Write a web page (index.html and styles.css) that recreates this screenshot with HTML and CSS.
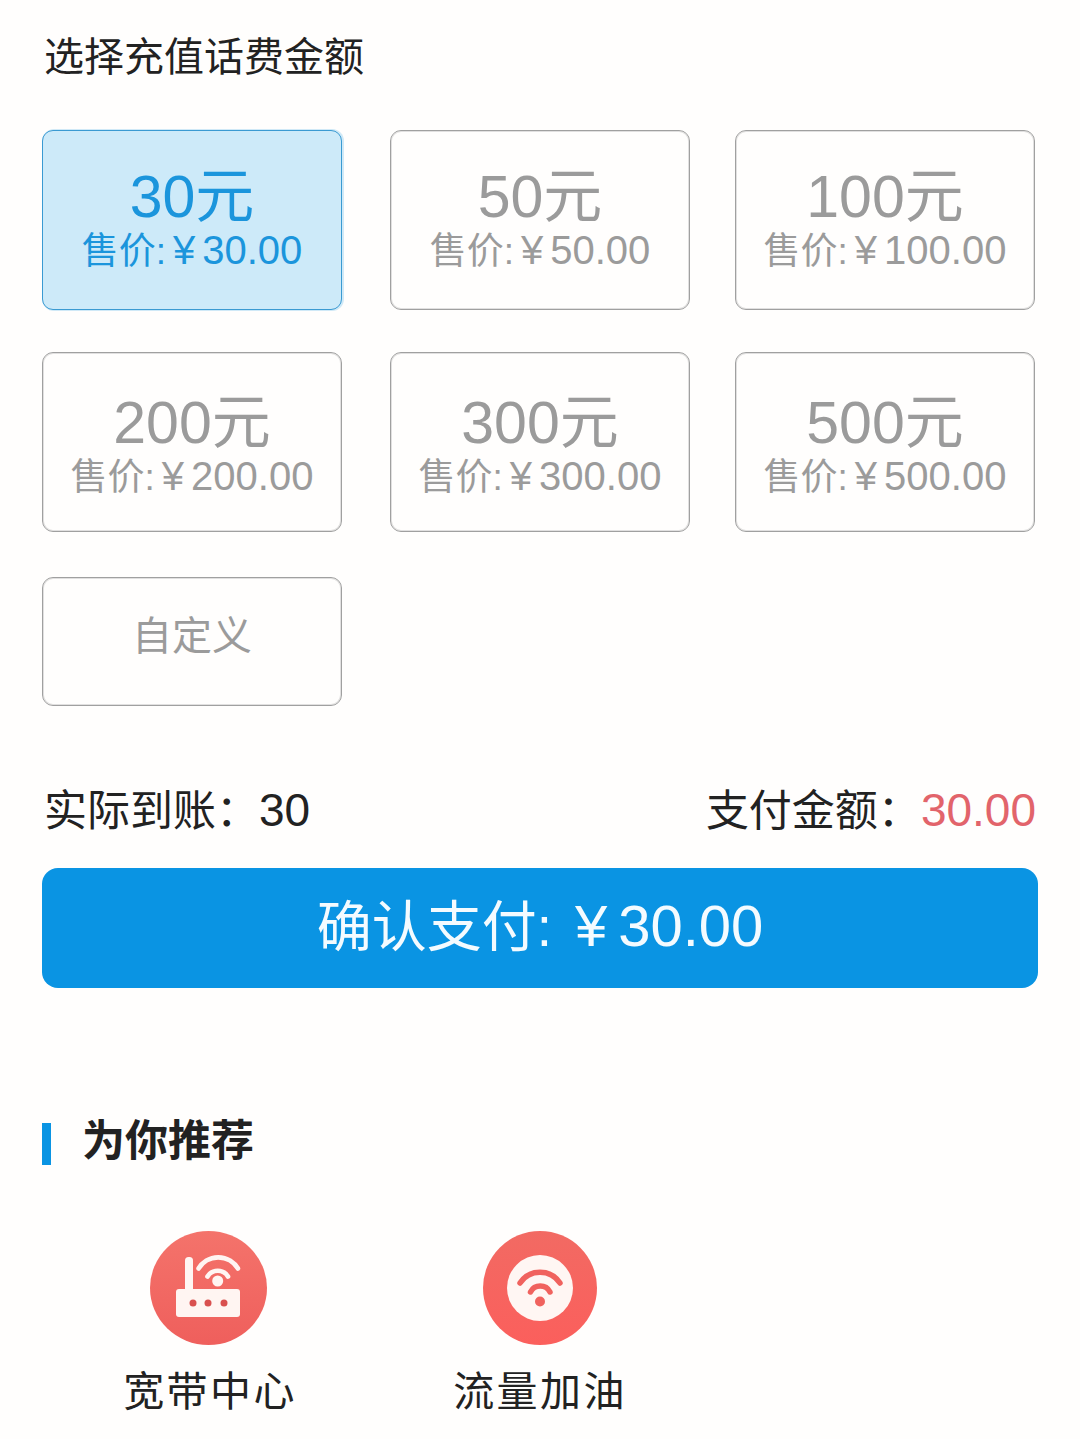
FILE: index.html
```html
<!DOCTYPE html>
<html lang="zh-CN">
<head>
<meta charset="utf-8">
<title>选择充值话费金额</title>
<link rel="stylesheet" href="styles.css">
</head>
<body>
<main class="page">
  <h1 class="title">选择充值话费金额</h1>
  <div class="grid">
    <div class="card active"><div class="amount">30元</div><div class="price">售价:<span class="yen">¥</span><span class="val">30.00</span></div></div>
    <div class="card"><div class="amount">50元</div><div class="price">售价:<span class="yen">¥</span><span class="val">50.00</span></div></div>
    <div class="card"><div class="amount">100元</div><div class="price">售价:<span class="yen">¥</span><span class="val">100.00</span></div></div>
    <div class="card low"><div class="amount">200元</div><div class="price">售价:<span class="yen">¥</span><span class="val">200.00</span></div></div>
    <div class="card low"><div class="amount">300元</div><div class="price">售价:<span class="yen">¥</span><span class="val">300.00</span></div></div>
    <div class="card low"><div class="amount">500元</div><div class="price">售价:<span class="yen">¥</span><span class="val">500.00</span></div></div>
    <div class="card custom">自定义</div>
  </div>
  <div class="summary">
    <div>实际到账：<span class="num">30</span></div>
    <div>支付金额：<span class="num red">30.00</span></div>
  </div>
  <button class="pay"><span class="pay-label">确认支付:</span><span class="pay-yen">¥</span><span class="pay-val">30.00</span></button>
  <h2 class="section"><span class="bar"></span><span class="section-text">为你推荐</span></h2>
  <div class="recs">
    <div class="rec rec-a">
      <svg class="icon" viewBox="0 0 117 114" aria-hidden="true">
        <defs><linearGradient id="g1" x1="0" y1="0" x2="0" y2="1"><stop offset="0" stop-color="#f4736b"/><stop offset="1" stop-color="#ef5f5c"/></linearGradient></defs>
        <ellipse cx="58.5" cy="57" rx="58.5" ry="57" fill="url(#g1)"/>
        <rect x="26" y="58" width="64" height="28" rx="3" fill="#fff5f2"/>
        <rect x="35" y="26" width="8" height="36" rx="3.5" fill="#fff5f2"/>
        <circle cx="43" cy="72" r="3.5" fill="#d9504f"/><circle cx="58" cy="72" r="3.5" fill="#d9504f"/><circle cx="74" cy="72" r="3.5" fill="#d9504f"/>
        <circle cx="67.7" cy="50" r="5.5" fill="#fff5f2"/>
        <path d="M57.5 45.5A12 12 0 0 1 78 45.5" fill="none" stroke="#fff5f2" stroke-width="4.7" stroke-linecap="round"/>
        <path d="M48.5 37.5A23 23 0 0 1 88 37.5" fill="none" stroke="#fff5f2" stroke-width="4.7" stroke-linecap="round"/>
      </svg>
      <div class="rec-label">宽带中心</div>
    </div>
    <div class="rec rec-b">
      <svg class="icon icon-b" viewBox="0 0 114 114" aria-hidden="true">
        <defs><linearGradient id="g2" x1="0" y1="0" x2="0" y2="1"><stop offset="0" stop-color="#f26a63"/><stop offset="1" stop-color="#fb5f5c"/></linearGradient></defs>
        <circle cx="57" cy="57" r="57" fill="url(#g2)"/>
        <circle cx="57" cy="57" r="33" fill="#fff6f3"/>
        <path d="M37 52A24 24 0 0 1 77 52" fill="none" stroke="#f0625e" stroke-width="5.5" stroke-linecap="round"/>
        <path d="M47.5 61A11 11 0 0 1 67 61" fill="none" stroke="#f0625e" stroke-width="5.5" stroke-linecap="round"/>
        <circle cx="57" cy="70.5" r="5" fill="#f0625e"/>
      </svg>
      <div class="rec-label">流量加油</div>
    </div>
  </div>
</main>
</body>
</html>
```
FILE: styles.css
```css
* { box-sizing: border-box; }
html, body { margin: 0; padding: 0; }
body {
  background: #fffefd;
  color: #222;
  font-family: "Liberation Sans", "Noto Sans CJK SC", sans-serif;
  height: 1439px;
  overflow: hidden;
}
.page { padding: 0 42px; }
.title {
  margin: 0;
  padding: 33px 0 0 2px;
  height: 130px;
  font-size: 40px;
  line-height: 48px;
  font-weight: 400;
}
.grid {
  display: grid;
  grid-template-columns: 348px 345px 300px;
  grid-template-rows: 222px 225px 129px;
}
.card {
  width: 300px;
  height: 180px;
  border: 1px solid #a0a0a0;
  border-radius: 11px;
  box-shadow: inset 0 0 0 1px rgba(170, 170, 170, 0.35);
  color: #9b9b9b;
  text-align: center;
  padding-top: 33px;
}
.card.active {
  background: #cdeaf9;
  border-color: #3a9ad2;
  box-shadow: 1px 0 0 1px rgba(120, 195, 235, 0.35);
  color: #1b95dc;
}
.card.low { padding-top: 37px; }
.card.low .amount { line-height: 67px; }
.card.custom {
  height: 129px;
  padding-top: 33px;
  font-size: 40px;
  line-height: 50px;
}
.amount { font-size: 59px; line-height: 67px; }
.price { font-size: 37px; line-height: 38px; white-space: nowrap; }
.yen { font-size: 40px; margin: 0 7px; }
.val { font-size: 40px; }
.summary {
  display: flex;
  justify-content: space-between;
  margin-top: 76px;
  padding: 0 0 0 2px;
  width: 994px;
  font-size: 43px;
  line-height: 56px;
}
.num { font-size: 46px; }
.red { color: #e2646b; }
.pay {
  display: block;
  width: 996px;
  height: 120px;
  margin: 29px 0 0;
  padding: 0 0 12px;
  border: 0;
  border-radius: 16px;
  background: #0a94e3;
  color: #f4fbff;
  font-family: inherit;
  font-size: 55px;
  white-space: nowrap;
}
.pay-yen { font-size: 58px; margin: 0 11px 0 23px; }
.pay-val { font-size: 58px; }
.section {
  display: flex;
  align-items: center;
  margin: 135px 0 0;
  height: 42px;
  font-size: 43px;
  font-weight: 700;
}
.bar { width: 9px; height: 42px; background: #0a94e3; margin-right: 31px; }
.section-text { line-height: 42px; margin-top: -6px; }
.recs { display: flex; margin-top: 66px; }
.rec { display: flex; flex-direction: column; align-items: center; width: 172px; }
.rec-a { margin-left: 80px; }
.rec-b { margin-left: 160px; }
.rec-a .rec-label { margin-left: 4px; }
.icon { width: 117px; height: 114px; display: block; }
.icon-b { width: 114px; }
.rec-label { margin-top: 19px; font-size: 41px; line-height: 56px; letter-spacing: 2.4px; white-space: nowrap; }
```
